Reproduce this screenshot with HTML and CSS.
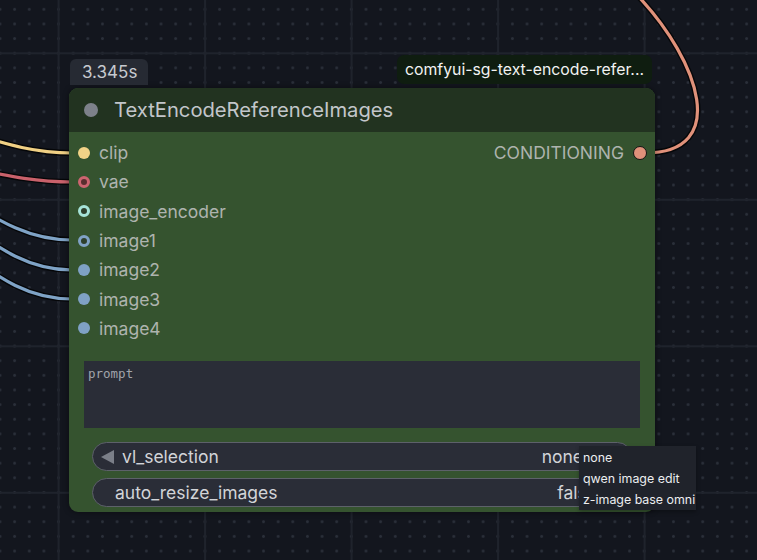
FILE: index.html
```html
<!DOCTYPE html>
<html>
<head>
<meta charset="utf-8">
<link rel="stylesheet" href="styles.css">
</head>
<body>
<div class="canvas">
  <svg class="wires" width="757" height="560" viewBox="0 0 757 560">
    <g class="wire-shadow">
      <path d="M -40 130 C 0 142, 30 153, 72 153"/>
      <path d="M -40 166 C 0 174, 30 182, 72 182"/>
      <path d="M -40 196 C 0 222, 30 240, 72 240"/>
      <path d="M -40 220 C 0 250, 30 270, 72 270"/>
      <path d="M -40 248 C 0 280, 30 299, 72 299"/>
      <path d="M 645 153 C 730 153, 700 62, 638 -4"/>
    </g>
    <path class="wire" stroke="#f0d084" d="M -40 130 C 0 142, 30 153, 72 153"/>
    <path class="wire" stroke="#c9616b" d="M -40 166 C 0 174, 30 182, 72 182"/>
    <path class="wire" stroke="#7fa3c6" d="M -40 196 C 0 222, 30 240, 72 240"/>
    <path class="wire" stroke="#7fa3c6" d="M -40 220 C 0 250, 30 270, 72 270"/>
    <path class="wire" stroke="#7fa3c6" d="M -40 248 C 0 280, 30 299, 72 299"/>
    <path class="wire" stroke="#e0917a" d="M 645 153 C 730 153, 700 62, 638 -4"/>
  </svg>

  <div class="node">
    <div class="badge-time">3.345s</div>
    <div class="badge-pack">comfyui-sg-text-encode-refer...</div>
    <div class="node-header">
      <span class="header-dot"></span>
      <span class="node-title">TextEncodeReferenceImages</span>
    </div>
    <div class="node-body">
      <div class="slots">
        <div class="slot-row">
          <div class="slot-in"><span class="dot dot-clip"></span><span>clip</span></div>
          <div class="slot-out"><span>CONDITIONING</span><span class="dot dot-cond"></span></div>
        </div>
        <div class="slot-row"><div class="slot-in"><span class="dot ring ring-vae"></span><span>vae</span></div></div>
        <div class="slot-row"><div class="slot-in"><span class="dot ring ring-enc"></span><span>image_encoder</span></div></div>
        <div class="slot-row"><div class="slot-in"><span class="dot ring ring-img"></span><span>image1</span></div></div>
        <div class="slot-row"><div class="slot-in"><span class="dot dot-img"></span><span>image2</span></div></div>
        <div class="slot-row"><div class="slot-in"><span class="dot dot-img"></span><span>image3</span></div></div>
        <div class="slot-row"><div class="slot-in"><span class="dot dot-img"></span><span>image4</span></div></div>
      </div>
      <div class="prompt">prompt</div>
      <div class="widgets">
        <div class="widget">
          <span class="arrow-left"></span>
          <span class="w-label">vl_selection</span>
          <span class="w-value w-value-combo">none</span>
        </div>
        <div class="widget">
          <span class="w-label w-label-plain">auto_resize_images</span>
          <span class="w-value w-value-toggle">false</span>
        </div>
      </div>
    </div>
    <div class="menu">
      <div class="menu-item">none</div>
      <div class="menu-item">qwen image edit</div>
      <div class="menu-item">z-image base omni</div>
    </div>
  </div>
</div>
</body>
</html>
```

FILE: styles.css
```css
html, body {
  margin: 0;
  padding: 0;
  width: 757px;
  height: 560px;
  overflow: hidden;
  background: #13161e;
  font-family: Inter, "Noto Sans", sans-serif;
}

.canvas {
  position: relative;
  width: 757px;
  height: 560px;
  overflow: hidden;
  background-color: #13161e;
  background-image:
    linear-gradient(to right, #1f232c 2px, transparent 2px),
    linear-gradient(to bottom, #1f232c 2px, transparent 2px),
    radial-gradient(circle, #2a2f39 1.2px, transparent 1.6px);
  background-size: 146.5px 146.5px, 146.5px 146.5px, 14.65px 14.65px;
  background-position: 57.6px 0, 0 52.3px, 7.3px 2px;
}

.wires {
  position: absolute;
  left: 0;
  top: 0;
}

.wire-shadow path {
  fill: none;
  stroke: #050608;
  stroke-width: 6;
}

.wire {
  fill: none;
  stroke-width: 3.2;
}

.node {
  position: absolute;
  left: 69px;
  top: 88px;
  width: 586px;
  height: 424px;
  border-radius: 9px;
  background: #35532f;
  box-shadow: 0 0 6px rgba(0,0,0,0.45);
  display: flex;
  flex-direction: column;
}

.badge-time {
  position: absolute;
  left: 1px;
  top: -29px;
  height: 26px;
  padding: 0 11px 0 12px;
  border-radius: 6px 6px 0 0;
  background: #262a33;
  color: #c7cad0;
  font-size: 17px;
  line-height: 26px;
}

.badge-pack {
  position: absolute;
  right: 3px;
  top: -33px;
  height: 29px;
  padding: 0 8px 0 8px;
  border-radius: 7px;
  background: #0f1d10;
  color: #f2f2f2;
  font-size: 15.8px;
  line-height: 29px;
}

.node-header {
  height: 44px;
  flex: none;
  background: #223320;
  border-radius: 9px 9px 0 0;
  display: flex;
  align-items: center;
  padding-left: 15px;
  gap: 16px;
}

.header-dot {
  width: 14px;
  height: 14px;
  border-radius: 50%;
  background: #7d818a;
}

.node-title {
  color: #c2c6ca;
  font-size: 20.2px;
  margin-top: -1px;
}

.node-body {
  display: flex;
  flex-direction: column;
  padding-top: 6px;
}

.slots {
  display: flex;
  flex-direction: column;
}

.slot-row {
  height: 29.3px;
  display: flex;
  align-items: center;
  justify-content: space-between;
  padding: 0 8px 0 9px;
}

.slot-in, .slot-out {
  display: flex;
  align-items: center;
  gap: 9px;
  color: #aeb3ae;
  font-size: 17.5px;
}

.dot {
  width: 12px;
  height: 12px;
  border-radius: 50%;
  box-sizing: border-box;
  flex: none;
}

.dot-clip { background: #f2d387; }
.dot-img { background: #7fa1c5; }
.dot-cond {
  width: 14px;
  height: 14px;
  background: #e0917a;
  border: 1.6px solid #141414;
}

.ring { background: #2e3f2c; border: 3px solid; }
.ring-vae { border-color: #cd6470; background: #5a2d2f; }
.ring-enc { border-color: #a6e3d8; }
.ring-img { border-color: #80a2c6; }

.prompt {
  margin: 18px 15px 0 15px;
  height: 67px;
  box-sizing: border-box;
  background: #2a2d37;
  color: #a1a5ab;
  font-family: "DejaVu Sans Mono", monospace;
  font-size: 12.5px;
  padding: 5px 4px;
}

.widgets {
  display: flex;
  flex-direction: column;
  gap: 7px;
  margin: 14px 23px 0 23px;
}

.widget {
  height: 29px;
  box-sizing: border-box;
  border: 1px solid #5d616a;
  border-radius: 15px;
  background: #2a2d37;
  display: flex;
  align-items: center;
  padding: 0 0 0 8px;
  font-size: 17.5px;
  color: #d2d4d8;
}

.arrow-left {
  width: 0;
  height: 0;
  border-top: 7px solid transparent;
  border-bottom: 7px solid transparent;
  border-right: 13px solid #7b7f88;
  margin-right: 8px;
}

.w-label { flex: 1; }
.w-label-plain { padding-left: 14px; }

.w-value {
  color: #d2d4d8;
}

.w-value-combo { margin-right: 48px; }
.w-value-toggle { margin-right: 34px; }

.menu {
  position: absolute;
  left: 510px;
  top: 358px;
  width: 117px;
  height: 64px;
  box-sizing: border-box;
  background: #20232b;
  padding: 1px 0 0 4px;
  display: flex;
  flex-direction: column;
  box-shadow: 0 2px 4px rgba(0,0,0,0.3);
}

.menu-item {
  color: #eceef0;
  font-size: 12.4px;
  height: 21px;
  line-height: 21px;
  white-space: nowrap;
}
```
